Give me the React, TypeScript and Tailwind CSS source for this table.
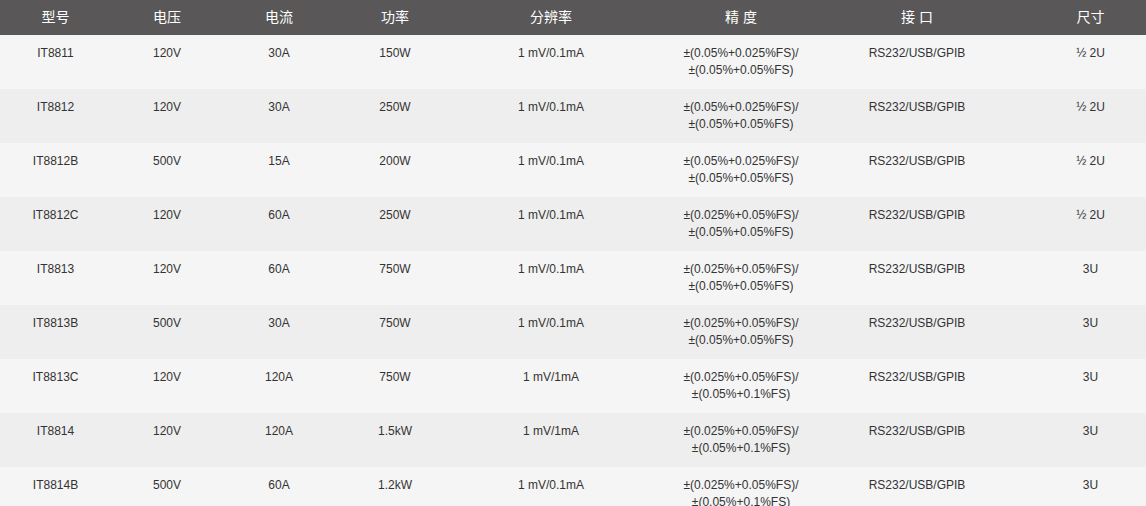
import React from "react";

type Row = {
  model: string;
  volt: string;
  amp: string;
  power: string;
  res: string;
  acc: [string, string];
  io: string;
  size: string;
};

const A1: [string, string] = ["±(0.05%+0.025%FS)/", "±(0.05%+0.05%FS)"];
const A2: [string, string] = ["±(0.025%+0.05%FS)/", "±(0.05%+0.05%FS)"];
const A3: [string, string] = ["±(0.025%+0.05%FS)/", "±(0.05%+0.1%FS)"];

const rows: Row[] = [
  { model: "IT8811", volt: "120V", amp: "30A", power: "150W", res: "1 mV/0.1mA", acc: A1, io: "RS232/USB/GPIB", size: "½ 2U" },
  { model: "IT8812", volt: "120V", amp: "30A", power: "250W", res: "1 mV/0.1mA", acc: A1, io: "RS232/USB/GPIB", size: "½ 2U" },
  { model: "IT8812B", volt: "500V", amp: "15A", power: "200W", res: "1 mV/0.1mA", acc: A1, io: "RS232/USB/GPIB", size: "½ 2U" },
  { model: "IT8812C", volt: "120V", amp: "60A", power: "250W", res: "1 mV/0.1mA", acc: A2, io: "RS232/USB/GPIB", size: "½ 2U" },
  { model: "IT8813", volt: "120V", amp: "60A", power: "750W", res: "1 mV/0.1mA", acc: A2, io: "RS232/USB/GPIB", size: "3U" },
  { model: "IT8813B", volt: "500V", amp: "30A", power: "750W", res: "1 mV/0.1mA", acc: A2, io: "RS232/USB/GPIB", size: "3U" },
  { model: "IT8813C", volt: "120V", amp: "120A", power: "750W", res: "1 mV/1mA", acc: A3, io: "RS232/USB/GPIB", size: "3U" },
  { model: "IT8814", volt: "120V", amp: "120A", power: "1.5kW", res: "1 mV/1mA", acc: A3, io: "RS232/USB/GPIB", size: "3U" },
  { model: "IT8814B", volt: "500V", amp: "60A", power: "1.2kW", res: "1 mV/0.1mA", acc: A3, io: "RS232/USB/GPIB", size: "3U" },
];

const heads = ["型号", "电压", "电流", "功率", "分辨率", "精 度", "接 口", "尺寸"];

export default function App() {
  return (
    <div
      className="w-[1146px] h-[506px] overflow-hidden bg-white"
      style={{ fontFamily: '"Liberation Sans", Arial, "Noto Sans CJK SC", sans-serif' }}
    >
      <table className="table-fixed border-collapse w-[1182px] text-center">
        <colgroup>
          <col className="w-[111px]" />
          <col className="w-[112px]" />
          <col className="w-[112px]" />
          <col className="w-[120px]" />
          <col className="w-[192px]" />
          <col className="w-[188px]" />
          <col className="w-[164px]" />
          <col className="w-[183px]" />
        </colgroup>
        <thead>
          <tr className="bg-[#5a5758] h-[35px]">
            {heads.map((h) => (
              <th key={h} className="text-white text-[14px] font-normal leading-[35px] p-0">
                {h}
              </th>
            ))}
          </tr>
        </thead>
        <tbody>
          {rows.map((r, i) => (
            <tr key={r.model} className={i % 2 === 0 ? "bg-[#f5f5f5]" : "bg-[#eeeeee]"}>
              {[r.model, r.volt, r.amp, r.power, r.res].map((v, j) => (
                <td key={j} className="align-top text-[12px] leading-[17px] text-[#333] py-[10px] h-[54px]">
                  {v}
                </td>
              ))}
              <td className="align-top text-[12px] leading-[17px] text-[#333] py-[10px]">
                {r.acc[0]}
                <br />
                {r.acc[1]}
              </td>
              <td className="align-top text-[12px] leading-[17px] text-[#333] py-[10px]">{r.io}</td>
              <td className="align-top text-[12px] leading-[17px] text-[#333] py-[10px]">{r.size}</td>
            </tr>
          ))}
        </tbody>
      </table>
    </div>
  );
}
